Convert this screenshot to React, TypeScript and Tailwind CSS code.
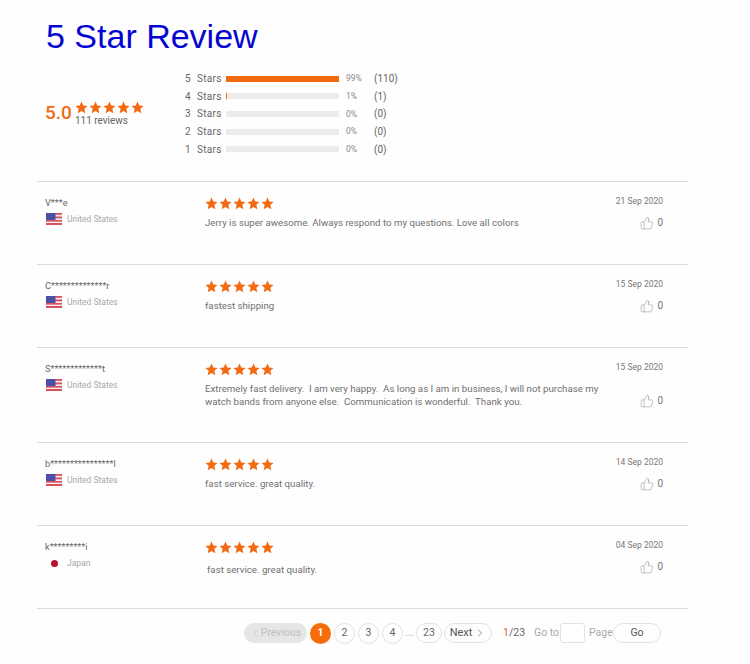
import { ThumbsUp, ChevronLeft, ChevronRight } from 'lucide-react';

const BARS = [
  { label: 5, fill: 'w-full', pct: '99%', count: '(110)' },
  { label: 4, fill: 'w-px', pct: '1%', count: '(1)' },
  { label: 3, fill: 'w-0', pct: '0%', count: '(0)' },
  { label: 2, fill: 'w-0', pct: '0%', count: '(0)' },
  { label: 1, fill: 'w-0', pct: '0%', count: '(0)' },
];

const REVIEWS = [
  { name: 'V***e', country: 'United States', date: '21 Sep 2020', text: ['Jerry is super awesome. Always respond to my questions. Love all colors'] },
  { name: 'C**************r', country: 'United States', date: '15 Sep 2020', text: ['fastest shipping'] },
  {
    name: 'S*************t',
    country: 'United States',
    date: '15 Sep 2020',
    text: [
      'Extremely fast delivery.  I am very happy.  As long as I am in business, I will not purchase my',
      'watch bands from anyone else.  Communication is wonderful.  Thank you.',
    ],
  },
  { name: 'b****************l', country: 'United States', date: '14 Sep 2020', text: ['fast service. great quality.'] },
  { name: 'k*********i', country: 'Japan', date: '04 Sep 2020', text: ['fast service. great quality.'] },
];

function Star({ size }: { size: number }) {
  return (
    <svg width={size} height={size} viewBox="0 0 24 24" className="shrink-0">
      <path fill="#f26a12" d="M12 1l3.3 7.3 7.9.9-5.9 5.3 1.7 7.9L12 18.4l-7 4 1.7-7.9L.8 9.2l7.9-.9z" />
    </svg>
  );
}

function Stars({ size }: { size: number }) {
  return (
    <div className="flex gap-px">
      {[0, 1, 2, 3, 4].map((i) => (
        <Star key={i} size={size} />
      ))}
    </div>
  );
}

function UsFlag() {
  return (
    <svg width="16" height="12" viewBox="0 0 16 12" className="shrink-0">
      <rect width="16" height="12" fill="#e9a0a4" />
      <rect y="2" width="16" height="1.6" fill="#f3eef0" />
      <rect y="5.4" width="16" height="1.6" fill="#f3eef0" />
      <rect y="8.6" width="16" height="1.4" fill="#f3eef0" />
      <rect y="10" width="16" height="2" fill="#d9515c" />
      <rect y="0" x="9" width="7" height="1.6" fill="#d9515c" />
      <rect y="3.6" x="9" width="7" height="1.6" fill="#d9515c" />
      <rect y="7" width="16" height="1.5" fill="#d9515c" />
      <rect width="9.5" height="7" fill="#4b4fa6" />
    </svg>
  );
}

function Flag({ country }: { country: string }) {
  if (country === 'Japan') {
    return (
      <div className="w-4 h-3 flex items-center justify-center shrink-0">
        <span className="w-[7px] h-[7px] rounded-full bg-[#b8102e]"></span>
      </div>
    );
  }
  return <UsFlag />;
}

function ReviewRow({ review, last }: { review: (typeof REVIEWS)[number]; last: boolean }) {
  return (
    <div className={`flex border-t border-[#d9d9d9] pl-2 pt-[15px] pr-[25px] pb-[34px] ${review.text.length > 1 ? 'h-[95px]' : 'h-[83px]'}`}>
      <div className="w-[160px] shrink-0">
        <div className="text-[9.2px] leading-[12px] text-[#666]">{review.name}</div>
        <div className="flex items-center gap-[5px] mt-[4px] pl-px">
          <Flag country={review.country} />
          <span className="text-[8.5px] leading-[12px] text-[#a8a8a8]">{review.country}</span>
        </div>
      </div>
      <div className="flex-1 min-w-0">
        <Stars size={13} />
        <div className={`text-[9.7px] leading-[13px] text-[#707070] whitespace-pre ${last ? 'mt-[9px] ml-[2px]' : 'mt-[6px]'}`}>
          {review.text.map((line) => (
            <div key={line}>{line}</div>
          ))}
        </div>
      </div>
      <div className="flex flex-col items-end justify-between shrink-0">
        <div className="-mt-px text-[8.5px] leading-[10px] text-[#777]">{review.date}</div>
        <div className="flex items-center gap-[3px] text-[10px] leading-[12px] text-[#777]">
          <ThumbsUp size={14} strokeWidth={1} className="text-[#999]" />
          <span>0</span>
        </div>
      </div>
    </div>
  );
}

function Pager() {
  const circle = 'w-[21px] h-[21px] rounded-full border border-[#e2e2e2] flex items-center justify-center text-[#666]';
  return (
    <div className="flex items-center h-[20px] mt-[14px] ml-[244px] text-[10.5px] text-[#666]">
      <div className="w-[63px] h-[20px] rounded-full bg-[#e6e6e6] flex items-center justify-center text-[#c0c0c0]">
        <ChevronLeft size={11} strokeWidth={1.5} />
        <span>Previous</span>
      </div>
      <div className="w-[21px] h-[21px] rounded-full bg-[#f56c08] text-white font-bold flex items-center justify-center ml-[3px]">1</div>
      <div className={`${circle} ml-[3px]`}>2</div>
      <div className={`${circle} ml-[3px]`}>3</div>
      <div className={`${circle} ml-[3px]`}>4</div>
      <span className="w-[13px] text-center text-[#aaa]">...</span>
      <div className="w-[26px] h-[20px] rounded-full border border-[#e2e2e2] flex items-center justify-center">23</div>
      <div className="w-[48px] h-[20px] rounded-full border border-[#e2e2e2] flex items-center justify-center ml-[2px] text-[11px] text-[#555]">
        <span>Next</span>
        <ChevronRight size={12} strokeWidth={1.25} className="ml-[2px]" />
      </div>
      <span className="ml-[11px] w-[20px]">
        <span className="text-[#d9623a]">1</span>/23
      </span>
      <span className="ml-[11px] w-[26px] text-[#aaa]">Go to</span>
      <div className="w-[25px] h-[20px] rounded-[3px] border border-[#e2e2e2] bg-white"></div>
      <span className="ml-[4px] w-[24px] text-[#aaa]">Page</span>
      <div className="w-[48px] h-[20px] rounded-full border border-[#e2e2e2] flex items-center justify-center text-[#555]">Go</div>
    </div>
  );
}

export default function App() {
  return (
    <div className="w-[750px] h-[664px] bg-[#fefefe] overflow-hidden [font-family:Roboto,sans-serif]">
      <h1 className="pl-[46px] pt-[14px] text-[34px] leading-[44px] text-[#0505d2] [font-family:'Liberation_Sans',Arial,sans-serif]">
        5 Star Review
      </h1>
      <div className="flex mt-[12px] h-[111px] pl-[45px]">
        <div className="flex items-start w-[140px] pt-[31px]">
          <span className="text-[19px] leading-[24px] font-medium text-[#ee6c12]">5.0</span>
          <div className="ml-[3px]">
            <Stars size={13} />
            <div className="text-[10px] leading-[12px] text-[#666] mt-px">111 reviews</div>
          </div>
        </div>
        <div className="text-[10px] text-[#666]">
          {BARS.map((b) => (
            <div key={b.label} className="flex items-center h-[17.6px]">
              <span className="w-[12px] tracking-[0.3px]">{b.label}</span>
              <span className="w-[29px] tracking-[0.3px]">Stars</span>
              <div className="w-[113px] h-[6px] bg-[#ececec]">
                <div className={`h-full bg-[#f26a0c] ${b.fill}`}></div>
              </div>
              <span className="w-[28px] pl-[7px] text-[8.5px] text-[#888]">{b.pct}</span>
              <span className="ml-[7px]">{b.count}</span>
            </div>
          ))}
        </div>
      </div>
      <div className="ml-[37px] w-[651px] border-b border-[#d9d9d9]">
        {REVIEWS.map((r, i) => (
          <ReviewRow key={r.name} review={r} last={i === REVIEWS.length - 1} />
        ))}
      </div>
      <Pager />
    </div>
  );
}
